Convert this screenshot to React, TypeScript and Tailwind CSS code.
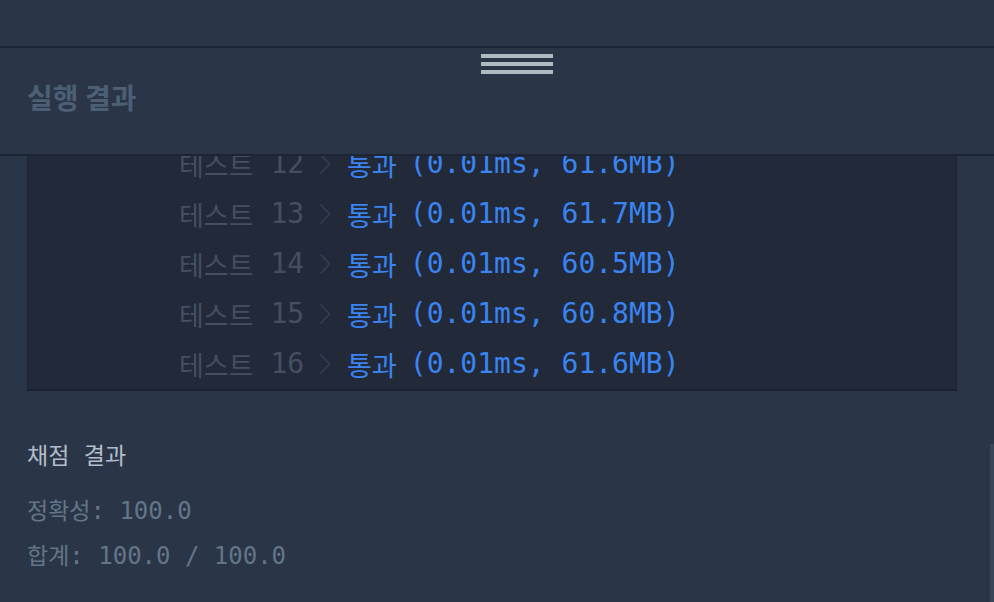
import React from 'react';

type Run = { no: number; time: string; mem: string };

const RUNS: Run[] = [
  { no: 12, time: '0.01ms', mem: '61.6MB' },
  { no: 13, time: '0.01ms', mem: '61.7MB' },
  { no: 14, time: '0.01ms', mem: '60.5MB' },
  { no: 15, time: '0.01ms', mem: '60.8MB' },
  { no: 16, time: '0.01ms', mem: '61.6MB' },
];

const MONO = 'font-["DejaVu_Sans_Mono","Noto_Sans_CJK_KR",monospace]';
const KR = 'font-["Noto_Sans_CJK_KR",sans-serif]';

const Chevron = () => (
  <svg width="12" height="22" viewBox="0 0 12 22" fill="none" className="shrink-0">
    <path d="M1.5 1.5 L10.5 11 L1.5 20.5" stroke="#353f50" strokeWidth="1.6" strokeLinejoin="round" />
  </svg>
);

const RunRow: React.FC<{ run: Run }> = ({ run }) => (
  <div className="flex h-[50px] items-center pl-[151px] leading-none">
    <span className={`${KR} text-[27px] text-[#454f60]`}>테스트</span>
    <span className={`${MONO} text-[28px] text-[#454f60] whitespace-pre`}> {run.no}</span>
    <span className="ml-[15px]">
      <Chevron />
    </span>
    <span className={`${KR} ml-[16px] text-[27px] text-[#3a84f2]`}>통과</span>
    <span className={`${MONO} ml-[13px] text-[28px] text-[#3a84f2] whitespace-pre`}>
      ({run.time}, {run.mem})
    </span>
  </div>
);

export default function App() {
  return (
    <div className="relative flex h-[602px] w-[994px] flex-col overflow-hidden bg-[#2a3648]">
      {/* editor area above the drag handle */}
      <div className="h-[48px] shrink-0 border-b-2 border-[#1d2433]" />

      {/* result panel header */}
      <header className="h-[108px] shrink-0 border-b-2 border-[#1d2433]">
        <div className="flex flex-col items-center gap-[4px] pl-[40px] pt-[6px]">
          <div className="h-[4px] w-[72px] bg-[#b0bac3]" />
          <div className="h-[4px] w-[72px] bg-[#b0bac3]" />
          <div className="h-[4px] w-[72px] bg-[#b0bac3]" />
        </div>
        <h2 className={`${KR} mt-[4px] pl-[27px] text-[28px] font-bold leading-[38px] text-[#4c5f75]`}>실행 결과</h2>
      </header>

      {/* scrolled output */}
      <div className="flex-1 overflow-hidden">
        <div className="-mt-[17px] px-[27px]">
          <div className="w-[930px] border-x border-b-2 border-[#1b2230] bg-[#222a3a]">
            {RUNS.map(r => (
              <RunRow key={r.no} run={r} />
            ))}
          </div>

          <div className="pt-[46px]">
            <div className={`${MONO} text-[24px] leading-[34px] text-[#b2bdc9] whitespace-pre`}>
              <span className={`${KR} text-[23px]`}>채점</span> <span className={`${KR} text-[23px]`}>결과</span>
            </div>
            <div className={`${MONO} mt-[19px] text-[24px] leading-[34px] text-[#637588] whitespace-pre`}>
              <span className={`${KR} text-[23px]`}>정확성</span>: 100.0
            </div>
            <div className={`${MONO} mt-[9px] text-[24px] leading-[34px] text-[#637588] whitespace-pre`}>
              <span className={`${KR} text-[23px]`}>합계</span>: 100.0 / 100.0
            </div>
          </div>
        </div>
      </div>

      {/* scrollbar thumb */}
      <div className="absolute bottom-0 right-0 top-[444px] w-[4px] bg-[#394659]" />
    </div>
  );
}
